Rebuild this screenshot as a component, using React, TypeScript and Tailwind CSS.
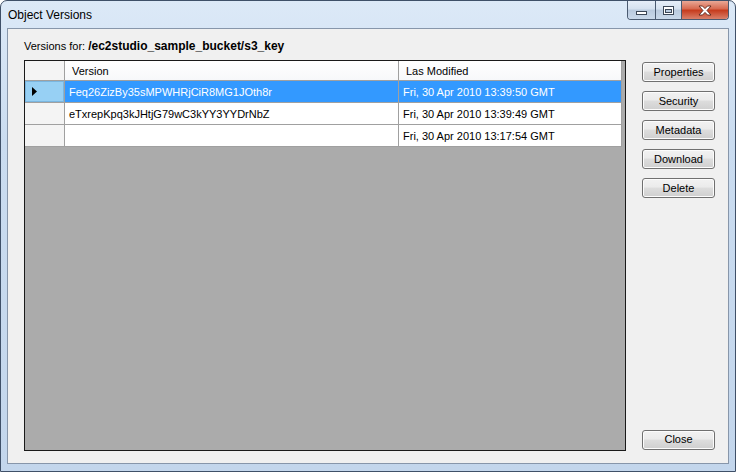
const FONT = { fontFamily: '"Liberation Sans", Arial, sans-serif' };

type Row = { id: string; modified: string };

const rows: Row[] = [
  { id: "Feq26ZizBy35sMPWHRjCiR8MG1JOth8r", modified: "Fri, 30 Apr 2010 13:39:50 GMT" },
  { id: "eTxrepKpq3kJHtjG79wC3kYY3YYDrNbZ", modified: "Fri, 30 Apr 2010 13:39:49 GMT" },
  { id: "", modified: "Fri, 30 Apr 2010 13:17:54 GMT" },
];

const sideButtons = ["Properties", "Security", "Metadata", "Download", "Delete"];

const WinButton = ({ label }: { label: string }) => (
  <button className="h-[20px] w-[73px] rounded-[3px] border border-[#707070] bg-[linear-gradient(#f2f2f2,#ebebeb_45%,#dddddd_50%,#cfcfcf)] text-[11px] leading-none text-black shadow-[inset_0_0_0_1px_#fcfcfc]">
    {label}
  </button>
);

const CaptionButtons = () => (
  <div className="flex h-[19px] overflow-hidden rounded-b-[4px] border border-t-0 border-[#4a5a70]">
    <div className="flex w-[28px] items-end justify-center border-r border-[#4a5a70] bg-[linear-gradient(#e6eef8,#d5e1ef_45%,#b9cade_50%,#c9d8ea)] pb-[4px]">
      <svg width="11" height="4" viewBox="0 0 11 4">
        <rect x="0.5" y="0.5" width="10" height="3" fill="#fff" stroke="#3b4656" />
      </svg>
    </div>
    <div className="flex w-[26px] items-center justify-center border-r border-[#4a5a70] bg-[linear-gradient(#e6eef8,#d5e1ef_45%,#b9cade_50%,#c9d8ea)]">
      <svg width="11" height="9" viewBox="0 0 11 9">
        <rect x="0.5" y="0.5" width="10" height="8" fill="#fff" stroke="#3b4656" />
        <rect x="2.5" y="3.5" width="6" height="3" fill="#b9cade" stroke="#3b4656" />
      </svg>
    </div>
    <div className="flex w-[46px] items-center justify-center bg-[linear-gradient(#e9a896,#d6674d_45%,#c5391b_50%,#d9806a)]">
      <svg width="14" height="11" viewBox="0 0 14 11">
        <path
          d="M1 1 L4.5 1 L7 3.6 L9.5 1 L13 1 L9 5.5 L13 10 L9.5 10 L7 7.4 L4.5 10 L1 10 L5 5.5 Z"
          fill="#fff"
          stroke="#5a2418"
          strokeWidth="0.9"
          strokeLinejoin="round"
        />
      </svg>
    </div>
  </div>
);

const VersionsGrid = () => (
  <div className="h-[391px] w-[602px] border border-[#1a1a1a] bg-[#ababab]">
    {/* header */}
    <div className="flex h-[20px]">
      <div className="w-[40px] border-r border-b border-[#a0a0a0] bg-[#f4f4f4]" />
      <div className="w-[334px] border-r border-b border-[#a0a0a0] bg-[linear-gradient(#ffffff,#f7f8fa)] pl-[7px] text-[11px] leading-[21px] text-black">
        Version
      </div>
      <div className="w-[223px] border-r border-b border-[#a0a0a0] bg-[linear-gradient(#ffffff,#f7f8fa)] pl-[7px] text-[11px] leading-[21px] text-black">
        Las Modified
      </div>
    </div>
    {rows.map((r, i) => {
      const sel = i === 0;
      return (
        <div key={i} className="flex h-[22px]">
          <div
            className={
              sel
                ? "flex w-[40px] items-center border-r border-b border-[#a0a0a0] bg-[#97d0f4] pl-[7px] shadow-[inset_0_0_0_1px_#7ab6e0]"
                : "w-[40px] border-r border-b border-[#a0a0a0] bg-[#f4f4f4]"
            }
          >
            {sel && (
              <svg width="5" height="9" viewBox="0 0 5 9">
                <path d="M0 0 L5 4.5 L0 9 Z" fill="#000" />
              </svg>
            )}
          </div>
          <div
            className={
              "w-[334px] border-r border-b border-[#a0a0a0] pl-[4px] text-[11px] leading-[22px] " +
              (sel ? "bg-[#3399ff] text-white" : "bg-white text-black")
            }
          >
            {r.id}
          </div>
          <div
            className={
              "w-[223px] border-r border-b border-[#a0a0a0] pl-[4px] text-[11px] leading-[22px] " +
              (sel ? "bg-[#3399ff] text-white" : "bg-white text-black")
            }
          >
            {r.modified}
          </div>
        </div>
      );
    })}
  </div>
);

export default function App() {
  return (
    <div style={FONT} className="h-[472px] w-[736px] overflow-hidden bg-white">
      <div className="flex h-[472px] w-[736px] flex-col rounded-t-[7px] border border-[#3f5068] bg-[linear-gradient(#dce9f7,#cadcf0_30%,#c3d6ec)]">
        {/* title bar */}
        <div className="flex h-[27px] items-start">
          <div className="pl-[7px] pt-[7px] text-[12px] leading-[14px] text-black">Object Versions</div>
          <div className="ml-auto mr-[6px]">
            <CaptionButtons />
          </div>
        </div>

        {/* client area */}
        <div className="mx-[6px] mb-[7px] flex flex-1 flex-col border border-[#8796aa] bg-[#f0f0f0] pl-[16px] pr-[13px] pt-[10px]">
          <div className="flex h-[14px] items-center gap-[3px] leading-[14px] text-black">
            <span className="text-[11px]">Versions for:</span>
            <span className="text-[12px] font-bold">/ec2studio_sample_bucket/s3_key</span>
          </div>
          <div className="mt-[7px] flex">
            <VersionsGrid />
            <div className="ml-[16px] flex h-[391px] flex-col gap-[9px] pt-[2px] pb-[1px]">
              {sideButtons.map((b) => (
                <WinButton key={b} label={b} />
              ))}
              <div className="mt-auto">
                <WinButton label="Close" />
              </div>
            </div>
          </div>
        </div>
      </div>
    </div>
  );
}
